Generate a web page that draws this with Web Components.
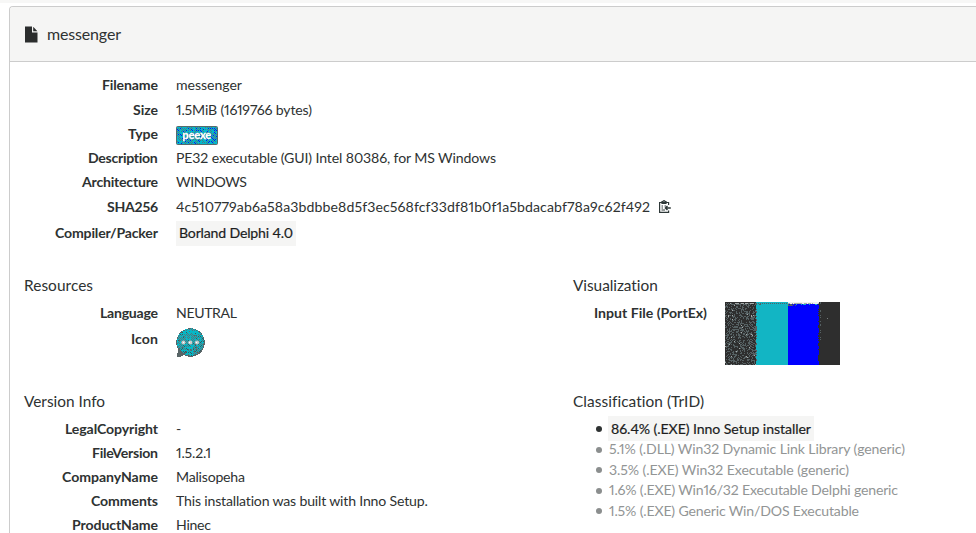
<!DOCTYPE html>
<html lang="en"><head><meta charset="utf-8"><title>messenger</title>
<style>html,body{margin:0;height:533px;overflow:hidden;background:#fff;font:14.1px Lato,"Open Sans",sans-serif;font-feature-settings:"pnum";color:#2e3232}</style>
</head><body><file-report></file-report>
<script>
function rng(a){return ()=>{a=(a+0x6D2B79F5)|0;let t=Math.imul(a^a>>>15,1|a);t=t+Math.imul(t^t>>>7,61|t)^t;return((t^t>>>14)>>>0)/4294967296}}
const base=(el,html)=>{el.attachShadow({mode:'open'}).innerHTML=html;return el.shadowRoot};

/* Text set to a measured width by adjusting its tracking. */
customElements.define('fit-text',class extends HTMLElement{
 connectedCallback(){
  base(this,'<style>:host{display:inline-block;white-space:nowrap;padding-bottom:1.6px}span{display:inline-block;white-space:pre}</style><span><slot></slot></span>');
  const s=this.shadowRoot.querySelector('span'),w=+this.getAttribute('w');
  const n=this.textContent.length,nat=s.getBoundingClientRect().width;
  if(n>1)s.style.letterSpacing=((w-nat)/(n-1))+'px';
  this.style.width=w+'px';
 }});

customElements.define('info-row',class extends HTMLElement{
 connectedCallback(){
  base(this,`<style>:host{display:grid;grid-template-columns:var(--lab,134px) 1fr;column-gap:18px;height:${this.getAttribute('h')||24}px}
  .l,.v{display:flex;align-items:center;height:100%}.l{justify-content:flex-end;font-weight:700;height:${this.getAttribute('lh')||'100%'}}
  .v{gap:8px}:host([top]) .v{align-items:flex-start}</style>
  <div class="l"><fit-text w="${this.getAttribute('w')}">${this.getAttribute('label')}</fit-text></div><div class="v"><slot></slot></div>`);
 }});

customElements.define('section-title',class extends HTMLElement{
 connectedCallback(){base(this,'<style>:host{display:flex;align-items:center;height:29px;padding-bottom:1px;font-size:15.4px}</style><slot></slot>')}});

customElements.define('mark-chip',class extends HTMLElement{
 connectedCallback(){base(this,'<style>:host{display:inline-flex;align-items:center;height:25px;padding:0 3px;background:#f5f5f4;color:#1c1e1e;-webkit-text-stroke:.2px}</style><slot></slot>')}});

customElements.define('type-badge',class extends HTMLElement{
 connectedCallback(){
  const r=base(this,`<style>:host{display:grid;width:42px;height:19px;border-radius:2px;overflow:hidden;margin-top:2px;color:#fff;font-size:11px;font-weight:700}
  canvas,span{grid-area:1/1}span{display:flex;align-items:center;justify-content:center;z-index:1;text-shadow:0 0 1px #566;-webkit-text-stroke:.3px #fff}</style><canvas width="42" height="19"></canvas><span><slot></slot></span>`);
  const c=r.querySelector('canvas').getContext('2d'),q=rng(9);
  for(let y=0;y<19;y++)for(let x=0;x<42;x++){
   let k=(x+y)%2?'#00b9cc':(q()<.22?'#1010f0':q()<.35?'#00b9cc':'#4b7b82');
   if(!x||!y||x==41||y==18)k='#586a6c';
   c.fillStyle=k;c.fillRect(x,y,1,1);}
 }});

customElements.define('chat-icon',class extends HTMLElement{
 connectedCallback(){
  const r=base(this,'<style>:host{display:block;width:29px;height:29px;margin-top:2px}canvas{display:block}</style><canvas width="29" height="29"></canvas>');
  const c=r.querySelector('canvas').getContext('2d'),q=rng(33);
  for(let y=0;y<29;y++)for(let x=0;x<29;x++){
   const d=Math.hypot(x-14,y-14),tail=y>18&&y<=28&&x>=1+Math.max(0,(25-y)*.3)&&x<9&&x<(28-y)*2+5;
   if(d>14.3&&!tail)continue;
   let k=(x+y)%2?(q()<y/200?'#596567':'#06b7c6'):(q()<.1+y/120?'#36585c':q()<.3?'#06b7c6':'#56757a');
   if(y<6&&q()<.55)k='#06b7c6';
   if((d>13.4&&(y>8||q()<.5))||tail&&d>12.5)k='#596567';
   c.fillStyle=k;c.fillRect(x,y,1,1);}
  for(const x of[7.5,14.3,21]){c.fillStyle='#c9cccc';c.beginPath();c.arc(x,14.5,2.1,0,7);c.fill();c.fillStyle='#fff';c.fillRect(Math.round(x)-1,14,1,1)}
 }});

customElements.define('byte-map',class extends HTMLElement{
 connectedCallback(){
  const r=base(this,'<style>:host{display:block;margin-top:1px}canvas{display:block}</style><canvas width="115" height="63"></canvas>');
  const c=r.querySelector('canvas').getContext('2d'),q=rng(71);
  const p=(k,x,y,w=1,h=1)=>{c.fillStyle=k;c.fillRect(x,y,w,h)};
  p('#2e2e2e',0,0,115,63);p('#12b5c4',31,0,32,63);p('#0000ff',63,2,31,61);
  for(let y=0;y<63;y++){for(let x=0;x<31;x++){const v=q();if(y<1)continue;if(v<.35)p('#566163',x,y);else if(v<.365)p('#a5aaaa',x,y)}
   if(q()<.35)p('#566163',31,y);if(q()<.3)p('#2e2e2e',93,y);if(y<40&&q()<.35)p('#566163',95,y)}
  for(let x=5;x<31;x++){if(q()<.5)p('#a5aaaa',x,1);if(q()<.3)p('#566163',x,2)}
  for(let x=31;x<63;x++){if(x%2)p('#566163',x,1);if(x<39&&q()<.5)p('#566163',x,2)}
  p('#f0f0ef',63,0,31,1);for(let x=63;x<94;x++){p(q()<.4?'#f0f0ef':'#a5aaaa',x,1);if(q()<.6)p(x<71?'#566163':'#12b5c4',x,2);if(x<71&&q()<.7)p('#566163',x,3)}
  p('#767b7b',102,16);
 }});

customElements.define('match-list',class extends HTMLElement{
 connectedCallback(){base(this,`<style>:host{display:flex;flex-direction:column;padding-left:23px}</style><slot></slot>`)}});
customElements.define('match-item',class extends HTMLElement{
 connectedCallback(){base(this,`<style>:host{display:flex;align-items:center;height:20.4px;color:#929595}
 i{width:6px;height:6px;border-radius:50%;background:#8b8e8e;margin-right:7px;flex:none}
 :host([top]){height:22.6px;color:#1c1e1e}:host([top]) i{background:#2e3232;margin-right:6px;margin-top:2px}:host([top]) ::slotted(mark-chip){margin-top:1px}</style><i></i><slot></slot>`)}});

customElements.define('file-report',class extends HTMLElement{
 connectedCallback(){base(this,`<style>
 :host{display:block;box-sizing:border-box;height:533px;overflow:hidden;border-top:3px solid #f7f7f6;padding:3px 0 0 9px}
 .panel{border:1px solid #ccc;border-width:1px 0 0 1px;border-radius:4px 0 0 0;height:526px;overflow:hidden}
 header{height:54px;background:#f5f5f4;border-bottom:1px solid #ccc;display:flex;align-items:center;padding-left:15px;font-size:16px}
 header svg{margin-right:9px}
 .main,.cols{padding-left:14px}.main{padding-top:11px}
 .cols{display:grid;grid-template-columns:549px 1fr;margin-top:25px;grid-template-rows:116px 138px}
 </style><div class="panel"><header>
 <svg width="13" height="17" viewBox="0 0 13 17"><path d="M0 .5H7V6.5H12.5V16.5H0ZM8.2 .7L12.4 5.3H8.2Z" fill="#2b2d2d"/></svg><fit-text w="74">messenger</fit-text></header>
 <div class="main">
 <info-row h="25" label="Filename" w="56"><fit-text w="66">messenger</fit-text></info-row>
 <info-row label="Size" w="25"><fit-text w="136">1.5MiB (1619766 bytes)</fit-text></info-row>
 <info-row label="Type" w="30"><type-badge><fit-text w="29">peexe</fit-text></type-badge></info-row>
 <info-row label="Description" w="70"><fit-text w="320">PE32 executable (GUI) Intel 80386, for MS Windows</fit-text></info-row>
 <info-row label="Architecture" w="76"><fit-text w="71">WINDOWS</fit-text></info-row>
 <info-row h="26" label="SHA256" w="51"><fit-text w="474">4c510779ab6a58a3bdbbe8d5f3ec568fcf33df81b0f1a5bdacabf78a9c62f492</fit-text>
 <svg width="14" height="14" viewBox="0 0 14 14" fill="none" stroke="#2e3838" stroke-width="1.2"><path d="M10.6 5V2.5H1.6V12.4H10.6V10.5M4 2.8V1.6H5C5 .3 7 .3 7 1.6H8V3.5H4ZM3.5 6H5M6.5 6H8M3.5 8H5M3.5 10H7"/><path d="M12.8 8H7.5M9.5 5.9L7.4 8L9.5 10.1" stroke-width="1.4"/></svg></info-row>
 <info-row h="26" label="Compiler/Packer" w="103"><mark-chip><fit-text w="114">Borland Delphi 4.0</fit-text></mark-chip></info-row>
 </div>
 <div class="cols">
 <section><section-title><fit-text w="69">Resources</fit-text></section-title>
 <info-row h="25" label="Language" w="58"><fit-text w="61">NEUTRAL</fit-text></info-row>
 <info-row h="34" lh="26px" top label="Icon" w="27"><chat-icon></chat-icon></info-row></section>
 <section><section-title><fit-text w="85">Visualization</fit-text></section-title>
 <info-row h="65" lh="25px" top label="Input File (PortEx)" w="113"><byte-map></byte-map></info-row></section>
 <section><section-title><fit-text w="81">Version Info</fit-text></section-title>
 <info-row label="LegalCopyright" w="93"><fit-text w="6">-</fit-text></info-row>
 <info-row label="FileVersion" w="66"><fit-text w="35">1.5.2.1</fit-text></info-row>
 <info-row label="CompanyName" w="96"><fit-text w="69">Malisopeha</fit-text></info-row>
 <info-row label="Comments" w="67"><fit-text w="252">This installation was built with Inno Setup.</fit-text></info-row>
 <info-row label="ProductName" w="86"><fit-text w="35">Hinec</fit-text></info-row></section>
 <section><section-title><fit-text w="131">Classification (TrID)</fit-text></section-title>
 <match-list>
 <match-item top><mark-chip><fit-text w="200">86.4% (.EXE) Inno Setup installer</fit-text></mark-chip></match-item>
 <match-item><fit-text w="296">5.1% (.DLL) Win32 Dynamic Link Library (generic)</fit-text></match-item>
 <match-item><fit-text w="240">3.5% (.EXE) Win32 Executable (generic)</fit-text></match-item>
 <match-item><fit-text w="289">1.6% (.EXE) Win16/32 Executable Delphi generic</fit-text></match-item>
 <match-item><fit-text w="250">1.5% (.EXE) Generic Win/DOS Executable</fit-text></match-item>
 </match-list></section></div></div>`)}});
</script></body></html>
